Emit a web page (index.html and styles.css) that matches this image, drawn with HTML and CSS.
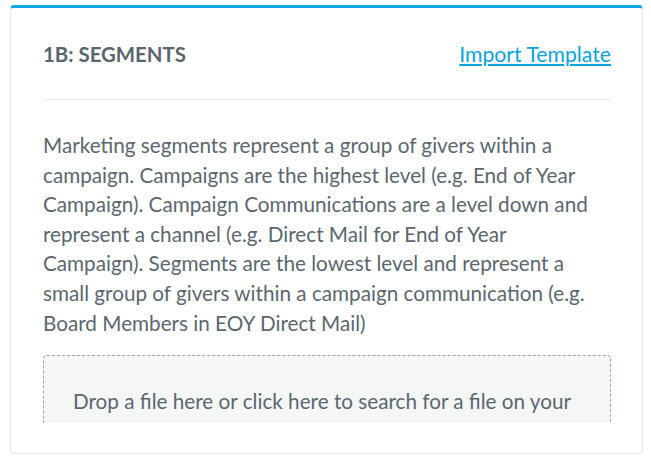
FILE: index.html
```html
<!DOCTYPE html>
<html lang="en">
<head>
    <meta charset="UTF-8">
    <meta name="viewport" content="width=device-width, initial-scale=1.0">
    <title>1B: Segments</title>
    <link rel="stylesheet" href="styles.css">
</head>
<body>

    <!-- segments card -->
    <div class="card">
        <div class="card-header">
            <h2 class="card-title">1B: SEGMENTS</h2>
            <a href="#" class="import-link">Import Template</a>
        </div>

        <div class="card-body">
            <p class="intro">Marketing segments represent a group of givers within a campaign. Campaigns are the highest level (e.g. End of Year Campaign). Campaign Communications are a level down and represent a channel (e.g. Direct Mail for End of Year Campaign). Segments are the lowest level and represent a small group of givers within a campaign communication (e.g. Board Members in EOY Direct Mail)</p>

            <div class="dropzone">
                <p>Drop a file here or click here to search for a file on your computer</p>
            </div>
        </div>
    </div>

</body>
</html>
```

FILE: styles.css
```css
/* page */
html, body {
    margin: 0;
    padding: 0;
    background-color: #ffffff;
    font-family: Lato, "Open Sans", sans-serif;
    color: #5b6770;
}

/* card */
.card {
    box-sizing: border-box;
    width: 633px;
    height: 449px;
    margin: 5px 0 0 10px;
    padding: 0 31px 0 32px;
    background-color: #ffffff;
    border: 1px solid #e4e7e9;
    border-top: 3px solid #0ea6e5;
    border-radius: 4px;
}

.card-header {
    display: flex;
    justify-content: space-between;
    align-items: center;
    height: 91px;
    border-bottom: 1px solid #e8ebec;
}

.card-title {
    margin: 0;
    font-size: 20.4px;
    font-weight: bold;
    color: #59666e;
}

.import-link {
    font-size: 21.2px;
    color: #0ba2df;
    text-decoration: underline;
}

/* content */
.card-body {
    height: 323px;
    overflow: hidden;
}

.intro {
    margin: 31px 0 17px;
    font-size: 20.7px;
    line-height: 29.6px;
}

.dropzone {
    padding: 29px 29px 30px;
    background-color: #f5f6f6;
    border: 1px dashed #9aa3a8;
    border-radius: 4px;
}

.dropzone p {
    margin: 0;
    font-size: 20.7px;
    line-height: 33px;
}
```
